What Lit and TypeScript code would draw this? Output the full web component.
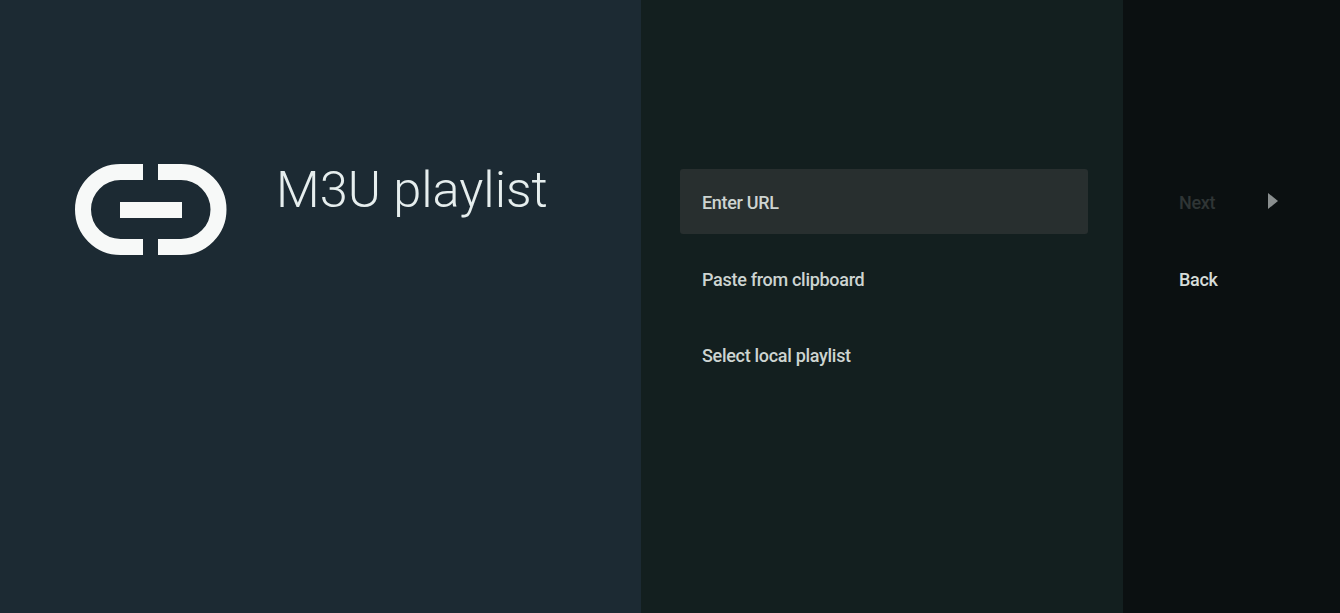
import { LitElement, html, css } from "lit";
import { customElement } from "lit/decorators.js";

@customElement("app-root")
class AppRoot extends LitElement {
  static styles = css`
    :host {
      display: block;
      width: 1340px;
      height: 613px;
      overflow: hidden;
      font-family: Roboto, "Noto Sans", sans-serif;
    }

    .screen {
      display: grid;
      grid-template-columns: 641px 482px 217px;
      height: 613px;
    }

    .intro {
      background: #1c2a33;
      display: flex;
      align-items: flex-start;
      gap: 50px;
      padding: 164px 0 0 75px;
    }
    .logo {
      display: block;
      width: 152px;
      height: 91px;
      flex: none;
    }
    .title {
      margin: -4px 0 0 -1px;
      font-size: 50.5px;
      line-height: 60px;
      font-weight: 300;
      color: #e6eeee;
      white-space: nowrap;
    }

    .options {
      background: #131f1f;
      padding: 169px 35px 0 39px;
      display: flex;
      flex-direction: column;
      gap: 11.5px;
    }
    .option {
      height: 65px;
      padding: 2px 22px 0;
      box-sizing: border-box;
      display: flex;
      align-items: center;
      border-radius: 3px;
      font-size: 18px;
      font-weight: 500;
      color: #cdd4d1;
      letter-spacing: -0.3px;
    }
    .option.focused {
      background: #282f2f;
    }

    .actions {
      background: #0b1011;
      padding: 169px 0 0 56px;
      display: flex;
      flex-direction: column;
      gap: 11.5px;
    }
    .action {
      height: 65px;
      padding-top: 2px;
      box-sizing: border-box;
      display: flex;
      align-items: center;
      font-size: 18px;
      font-weight: 500;
      letter-spacing: -0.3px;
      color: #d6dcd9;
    }
    .action.disabled {
      color: #2f3535;
    }
    .arrow {
      width: 10px;
      height: 16px;
      margin-left: 53px;
      margin-top: -3px;
      display: block;
    }
  `;

  render() {
    return html`
      <div class="screen">
        <section class="intro">
          <svg class="logo" viewBox="0 0 152 91" fill="none">
            <path
              d="M68 8H45.500a37.500 37.500 0 0 0 0 75H68"
              stroke="#f7f9f8"
              stroke-width="16"
            />
            <path
              d="M83 8h23a37.500 37.500 0 0 1 0 75H83"
              stroke="#f7f9f8"
              stroke-width="16"
            />
            <rect x="45" y="38" width="62" height="16" fill="#f7f9f8" />
          </svg>
          <h1 class="title">M3U playlist</h1>
        </section>
        <section class="options">
          <div class="option focused">Enter URL</div>
          <div class="option">Paste from clipboard</div>
          <div class="option">Select local playlist</div>
        </section>
        <section class="actions">
          <div class="action disabled">
            Next
            <svg class="arrow" viewBox="0 0 10 16">
              <path d="M0 0l10 8-10 8z" fill="#8a8f8f" />
            </svg>
          </div>
          <div class="action">Back</div>
        </section>
      </div>
    `;
  }
}
